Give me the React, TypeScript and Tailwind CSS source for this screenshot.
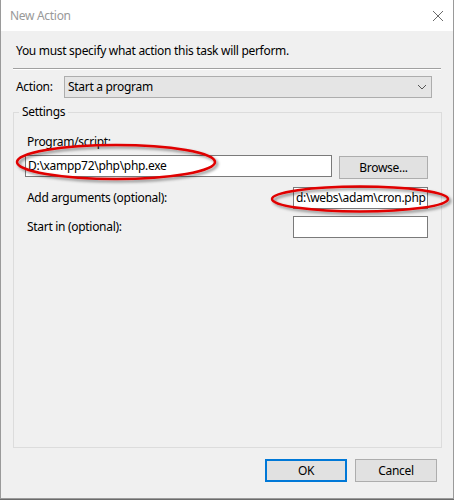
import React from "react";

const font = { fontFamily: '"Noto Sans", "Segoe UI", sans-serif' };

function Input({ value, className }: { value?: string; className: string }) {
  return (
    <div
      className={`border border-[#7a7a7a] bg-white h-[22px] flex items-center pl-[2px] text-[12px] leading-[16px] text-black whitespace-nowrap overflow-hidden shrink-0 ${className}`}
    >
      {value}
    </div>
  );
}

export default function App() {
  return (
    <div className="w-[454px] h-[500px] bg-[#6b6b6b] tracking-[-0.3px]" style={font}>
      <div className="relative w-[454px] h-[499px] border-x border-b border-[#9a9a9a] flex flex-col">
        {/* title bar */}
        <div className="h-[31px] bg-white flex items-center justify-between pl-[9px] pr-[9px] shrink-0">
          <span className="text-[12px] leading-[16px] text-[#999999]">New Action</span>
          <svg width="12" height="12" viewBox="0 0 12 12">
            <path d="M1 1 L11 11 M11 1 L1 11" stroke="#6a6a6a" strokeWidth="1" fill="none" />
          </svg>
        </div>

        {/* body */}
        <div className="flex-1 bg-[#f0f0f0] flex flex-col text-[12px] leading-[16px] text-black">
          <div className="mt-[12px] ml-[15px] h-[16px]">You must specify what action this task will perform.</div>
          <div className="mt-[9px] ml-[12px] w-[428px] border-t border-[#a0a0a0] border-b border-b-white h-[2px]" />

          <div className="mt-[6px] flex items-center h-[22px]">
            <span className="ml-[15px] w-[48px]">Action:</span>
            <div className="w-[368px] h-[22px] border border-[#adadad] bg-[#e5e5e5] flex items-center justify-between pl-[3px] pr-[4px]">
              <span>Start a program</span>
              <svg width="10" height="6" viewBox="0 0 10 6">
                <path d="M1 1 L5 5 L9 1" stroke="#555" strokeWidth="1" fill="none" />
              </svg>
            </div>
          </div>

          <fieldset className="mt-[6px] ml-[12px] w-[429px] h-[344px] border border-[#dcdcdc] pl-[11px] pr-[13px]">
            <legend className="ml-[-6px] px-[3px] leading-[16px]">Settings</legend>
            <div className="mt-[14px] ml-[2px] h-[16px]">Program/script:</div>
            <div className="mt-[5px] flex items-start gap-[7px]">
              <Input value={"D:\\xampp72\\php\\php.exe"} className="w-[307px]" />
              <button className="mt-[1px] w-[89px] h-[23px] shrink-0 border border-[#adadad] bg-[#e1e1e1] text-[12px] leading-[16px]">
                Browse...
              </button>
            </div>
            <div className="mt-[8px] flex items-center justify-between">
              <span className="ml-[2px]">Add arguments (optional):</span>
              <Input value={"d:\\webs\\adam\\cron.php"} className="w-[135px]" />
            </div>
            <div className="mt-[7px] flex items-center justify-between">
              <span className="ml-[2px]">Start in (optional):</span>
              <Input className="w-[135px]" />
            </div>
          </fieldset>

          <div className="mt-[11px] flex justify-end gap-[8px] pr-[16px]">
            <button className="w-[82px] h-[23px] border-2 border-[#0078d7] bg-[#e1e1e1] text-[12px] leading-[16px]">
              OK
            </button>
            <button className="w-[82px] h-[23px] border border-[#adadad] bg-[#e1e1e1] text-[12px] leading-[16px]">
              Cancel
            </button>
          </div>
        </div>

        {/* red annotation ellipses */}
        <svg className="absolute left-0 top-0 pointer-events-none" width="454" height="499">
          <defs>
            <filter id="sh" x="-20%" y="-50%" width="140%" height="200%">
              <feDropShadow dx="2" dy="2" stdDeviation="1.5" floodColor="#000" floodOpacity="0.45" />
            </filter>
          </defs>
          <ellipse cx="115" cy="162" rx="99" ry="17" fill="none" stroke="#e00000" strokeWidth="2.5" filter="url(#sh)" />
          <ellipse cx="359" cy="199" rx="88" ry="12.5" fill="none" stroke="#e00000" strokeWidth="2.5" filter="url(#sh)" />
        </svg>
      </div>
    </div>
  );
}
